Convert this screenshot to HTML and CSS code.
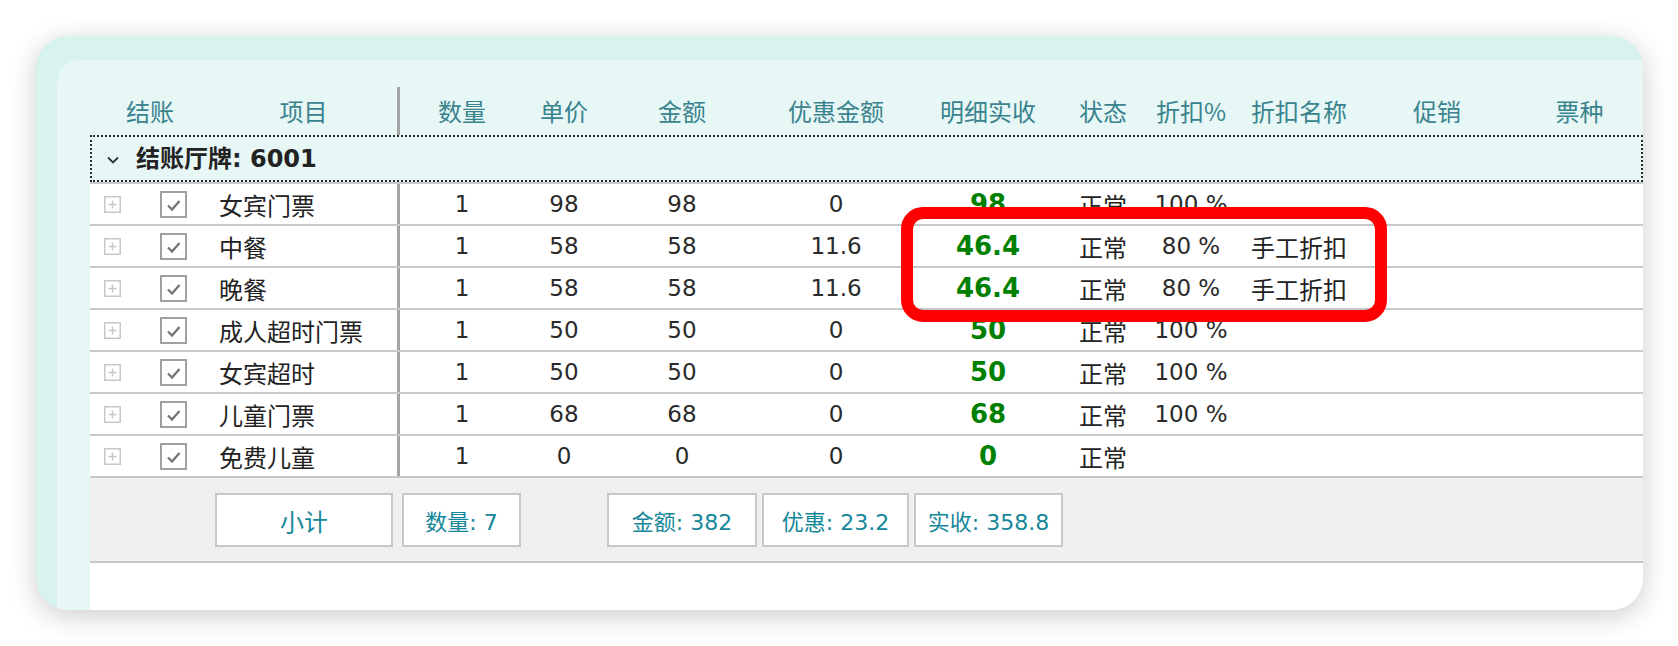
FILE: index.html
```html
<!DOCTYPE html>
<html lang="zh-CN">
<head>
<meta charset="utf-8">
<title>结账明细</title>
<link rel="stylesheet" href="styles.css">
</head>
<body>
<div class="page">
  <div class="card">
    <div class="panel">
      <div class="table">
        <div class="thead grid">
          <div class="th">结账</div>
          <div class="th">项目</div>
          <div class="sep"></div>
          <div class="th">数量</div>
          <div class="th">单价</div>
          <div class="th">金额</div>
          <div class="th">优惠金额</div>
          <div class="th">明细实收</div>
          <div class="th">状态</div>
          <div class="th">折扣%</div>
          <div class="th">折扣名称</div>
          <div class="th">促销</div>
          <div class="th">票种</div>
        </div>

        <div class="group">
          <svg class="chev" width="12" height="8" viewBox="0 0 12 8"><polyline points="1,1.5 6,6.5 11,1.5" fill="none" stroke="#333" stroke-width="1.8"/></svg>
          <span class="group-title">结账厅牌: 6001</span>
        </div>

        <div class="rows">
          <div class="row grid">
            <div class="td sel"><svg class="plus" width="17" height="17" viewBox="0 0 17 17"><rect x="0.75" y="0.75" width="15.5" height="15.5" fill="none" stroke="#c8c8c8" stroke-width="1.5"/><path d="M8.5 4.5V12.5M4.5 8.5H12.5" stroke="#c8c8c8" stroke-width="1.5"/></svg><svg class="chk" width="27" height="27" viewBox="0 0 27 27"><rect x="1" y="1" width="25" height="25" fill="#fff" stroke="#a0a0a0" stroke-width="2"/><polyline points="8,14.5 12,18.5 19.5,10" fill="none" stroke="#777" stroke-width="2.4"/></svg></div>
            <div class="td name">女宾门票</div>
            <div class="sep"></div>
            <div class="td n">1</div>
            <div class="td n">98</div>
            <div class="td n">98</div>
            <div class="td n">0</div>
            <div class="td g">98</div>
            <div class="td">正常</div>
            <div class="td n">100 %</div>
            <div class="td"></div>
            <div class="td"></div>
            <div class="td"></div>
          </div>
          <div class="row grid">
            <div class="td sel"><svg class="plus" width="17" height="17" viewBox="0 0 17 17"><rect x="0.75" y="0.75" width="15.5" height="15.5" fill="none" stroke="#c8c8c8" stroke-width="1.5"/><path d="M8.5 4.5V12.5M4.5 8.5H12.5" stroke="#c8c8c8" stroke-width="1.5"/></svg><svg class="chk" width="27" height="27" viewBox="0 0 27 27"><rect x="1" y="1" width="25" height="25" fill="#fff" stroke="#a0a0a0" stroke-width="2"/><polyline points="8,14.5 12,18.5 19.5,10" fill="none" stroke="#777" stroke-width="2.4"/></svg></div>
            <div class="td name">中餐</div>
            <div class="sep"></div>
            <div class="td n">1</div>
            <div class="td n">58</div>
            <div class="td n">58</div>
            <div class="td n">11.6</div>
            <div class="td g">46.4</div>
            <div class="td">正常</div>
            <div class="td n">80 %</div>
            <div class="td">手工折扣</div>
            <div class="td"></div>
            <div class="td"></div>
          </div>
          <div class="row grid">
            <div class="td sel"><svg class="plus" width="17" height="17" viewBox="0 0 17 17"><rect x="0.75" y="0.75" width="15.5" height="15.5" fill="none" stroke="#c8c8c8" stroke-width="1.5"/><path d="M8.5 4.5V12.5M4.5 8.5H12.5" stroke="#c8c8c8" stroke-width="1.5"/></svg><svg class="chk" width="27" height="27" viewBox="0 0 27 27"><rect x="1" y="1" width="25" height="25" fill="#fff" stroke="#a0a0a0" stroke-width="2"/><polyline points="8,14.5 12,18.5 19.5,10" fill="none" stroke="#777" stroke-width="2.4"/></svg></div>
            <div class="td name">晚餐</div>
            <div class="sep"></div>
            <div class="td n">1</div>
            <div class="td n">58</div>
            <div class="td n">58</div>
            <div class="td n">11.6</div>
            <div class="td g">46.4</div>
            <div class="td">正常</div>
            <div class="td n">80 %</div>
            <div class="td">手工折扣</div>
            <div class="td"></div>
            <div class="td"></div>
          </div>
          <div class="row grid">
            <div class="td sel"><svg class="plus" width="17" height="17" viewBox="0 0 17 17"><rect x="0.75" y="0.75" width="15.5" height="15.5" fill="none" stroke="#c8c8c8" stroke-width="1.5"/><path d="M8.5 4.5V12.5M4.5 8.5H12.5" stroke="#c8c8c8" stroke-width="1.5"/></svg><svg class="chk" width="27" height="27" viewBox="0 0 27 27"><rect x="1" y="1" width="25" height="25" fill="#fff" stroke="#a0a0a0" stroke-width="2"/><polyline points="8,14.5 12,18.5 19.5,10" fill="none" stroke="#777" stroke-width="2.4"/></svg></div>
            <div class="td name">成人超时门票</div>
            <div class="sep"></div>
            <div class="td n">1</div>
            <div class="td n">50</div>
            <div class="td n">50</div>
            <div class="td n">0</div>
            <div class="td g">50</div>
            <div class="td">正常</div>
            <div class="td n">100 %</div>
            <div class="td"></div>
            <div class="td"></div>
            <div class="td"></div>
          </div>
          <div class="row grid">
            <div class="td sel"><svg class="plus" width="17" height="17" viewBox="0 0 17 17"><rect x="0.75" y="0.75" width="15.5" height="15.5" fill="none" stroke="#c8c8c8" stroke-width="1.5"/><path d="M8.5 4.5V12.5M4.5 8.5H12.5" stroke="#c8c8c8" stroke-width="1.5"/></svg><svg class="chk" width="27" height="27" viewBox="0 0 27 27"><rect x="1" y="1" width="25" height="25" fill="#fff" stroke="#a0a0a0" stroke-width="2"/><polyline points="8,14.5 12,18.5 19.5,10" fill="none" stroke="#777" stroke-width="2.4"/></svg></div>
            <div class="td name">女宾超时</div>
            <div class="sep"></div>
            <div class="td n">1</div>
            <div class="td n">50</div>
            <div class="td n">50</div>
            <div class="td n">0</div>
            <div class="td g">50</div>
            <div class="td">正常</div>
            <div class="td n">100 %</div>
            <div class="td"></div>
            <div class="td"></div>
            <div class="td"></div>
          </div>
          <div class="row grid">
            <div class="td sel"><svg class="plus" width="17" height="17" viewBox="0 0 17 17"><rect x="0.75" y="0.75" width="15.5" height="15.5" fill="none" stroke="#c8c8c8" stroke-width="1.5"/><path d="M8.5 4.5V12.5M4.5 8.5H12.5" stroke="#c8c8c8" stroke-width="1.5"/></svg><svg class="chk" width="27" height="27" viewBox="0 0 27 27"><rect x="1" y="1" width="25" height="25" fill="#fff" stroke="#a0a0a0" stroke-width="2"/><polyline points="8,14.5 12,18.5 19.5,10" fill="none" stroke="#777" stroke-width="2.4"/></svg></div>
            <div class="td name">儿童门票</div>
            <div class="sep"></div>
            <div class="td n">1</div>
            <div class="td n">68</div>
            <div class="td n">68</div>
            <div class="td n">0</div>
            <div class="td g">68</div>
            <div class="td">正常</div>
            <div class="td n">100 %</div>
            <div class="td"></div>
            <div class="td"></div>
            <div class="td"></div>
          </div>
          <div class="row grid">
            <div class="td sel"><svg class="plus" width="17" height="17" viewBox="0 0 17 17"><rect x="0.75" y="0.75" width="15.5" height="15.5" fill="none" stroke="#c8c8c8" stroke-width="1.5"/><path d="M8.5 4.5V12.5M4.5 8.5H12.5" stroke="#c8c8c8" stroke-width="1.5"/></svg><svg class="chk" width="27" height="27" viewBox="0 0 27 27"><rect x="1" y="1" width="25" height="25" fill="#fff" stroke="#a0a0a0" stroke-width="2"/><polyline points="8,14.5 12,18.5 19.5,10" fill="none" stroke="#777" stroke-width="2.4"/></svg></div>
            <div class="td name">免费儿童</div>
            <div class="sep"></div>
            <div class="td n">1</div>
            <div class="td n">0</div>
            <div class="td n">0</div>
            <div class="td n">0</div>
            <div class="td g">0</div>
            <div class="td">正常</div>
            <div class="td"></div>
            <div class="td"></div>
            <div class="td"></div>
            <div class="td"></div>
          </div>
        </div>

        <div class="footer">
          <div class="box b-sub">小计</div>
          <div class="box b-qty">数量: 7</div>
          <div class="box b-amt">金额: 382</div>
          <div class="box b-disc">优惠: 23.2</div>
          <div class="box b-real">实收: 358.8</div>
        </div>
        <div class="blank"></div>

        <div class="highlight"></div>
      </div>
    </div>
  </div>
</div>
</body>
</html>
```

FILE: styles.css
```css
* { box-sizing: border-box; }

html, body {
  margin: 0;
  padding: 0;
  background: #ffffff;
}

body {
  font-family: "DejaVu Sans", "Noto Sans CJK SC", sans-serif;
  color: #222222;
}

.page {
  padding: 36px 0 0 36px;
  width: 1678px;
  height: 646px;
}

.card {
  width: 1607px;
  height: 574px;
  border-radius: 32px;
  background: #d8f2ee;
  overflow: hidden;
  padding: 24px 0 0 21px;
  box-shadow: 0 6px 28px rgba(0, 0, 0, 0.2);
}

.panel {
  height: 550px;
  background: #e6f7f5;
  border-top-left-radius: 22px;
  padding-left: 33px;
}

.table {
  position: relative;
  width: 1553px;
  height: 550px;
  display: flex;
  flex-direction: column;
}

.grid {
  display: grid;
  grid-template-columns: 120px 187px 3px 124px 80px 156px 152px 152px 78px 98px 118px 158px 1fr;
}

/* header */
.thead {
  padding-top: 27px;
  height: 75px;
}

.th {
  height: 48px;
  display: flex;
  align-items: center;
  justify-content: center;
  font-family: "Noto Sans CJK SC", sans-serif;
  font-size: 24px;
  color: #3a838e;
  padding-bottom: 2px;
}

.sep {
  background: #a4a4a4;
}

/* group row */
.group {
  height: 47px;
  border: 2px dotted #2a2a2a;
  display: flex;
  align-items: center;
  padding-left: 15px;
  background: #e6f7f5;
}

.chev {
  display: block;
  margin-right: 17px;
  margin-top: 2px;
}

.group-title {
  font-weight: bold;
  font-size: 24px;
  color: #222222;
  line-height: 1;
}

/* rows */
.rows {
  border-top: 2px solid #c8c8c8;
  background: #ffffff;
}

.row {
  height: 42px;
  border-bottom: 2px solid #c8c8c8;
  background: #ffffff;
}

.td {
  display: flex;
  align-items: center;
  justify-content: center;
  font-family: "Noto Sans CJK SC", sans-serif;
  font-size: 24px;
  color: #222222;
  white-space: nowrap;
}

.td.sel {
  justify-content: flex-start;
  padding-left: 14px;
}

.plus {
  display: block;
  margin-right: 39px;
}

.chk {
  display: block;
}

.td.name {
  justify-content: flex-start;
  padding-left: 9px;
}

.td.n {
  font-family: "DejaVu Sans", "Noto Sans CJK SC", sans-serif;
  font-size: 23px;
  color: #2a2a2a;
}

.td.g {
  font-family: "DejaVu Sans", "Noto Sans CJK SC", sans-serif;
  font-weight: bold;
  font-size: 26px;
  color: #008000;
}

/* footer */
.footer {
  height: 85px;
  background: #f0f0f0;
  border-bottom: 2px solid #c8c8c8;
  display: flex;
  align-items: flex-start;
  padding: 15px 0 0 125px;
}

.box {
  height: 54px;
  border: 2px solid #c8c8c8;
  background: #ffffff;
  display: flex;
  align-items: center;
  justify-content: center;
  font-family: "DejaVu Sans", "Noto Sans CJK SC", sans-serif;
  font-size: 22px;
  color: #15879a;
}

.b-sub { width: 178px; margin-right: 9px; font-family: "Noto Sans CJK SC", sans-serif; font-size: 24px; }
.b-qty { width: 119px; margin-right: 86px; }
.b-amt { width: 150px; margin-right: 5px; }
.b-disc { width: 147px; margin-right: 5px; }
.b-real { width: 149px; }

.blank {
  flex: 1;
  background: #ffffff;
}

/* annotation overlay */
.highlight {
  position: absolute;
  left: 811px;
  top: 147px;
  width: 486px;
  height: 115px;
  border: 12px solid #ff0000;
  border-radius: 22px;
  pointer-events: none;
}
```
